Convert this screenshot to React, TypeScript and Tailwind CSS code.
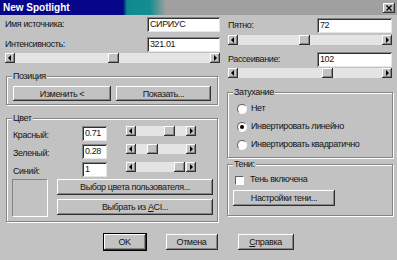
import React from 'react';

const raised =
  'bg-[#c2c2c2] shadow-[inset_-1px_-1px_0_#303030,inset_1px_1px_0_#ffffff,inset_-2px_-2px_0_#858585]';
const sunken =
  'bg-white shadow-[inset_1px_1px_0_#858585,inset_-1px_-1px_0_#e6e6e6,inset_2px_2px_0_#303030]';

function Arrow({ dir }: { dir: 'l' | 'r' }) {
  return (
    <div className={`w-[10px] h-[10px] flex items-center justify-center ${raised}`}>
      <svg width="4" height="6" viewBox="0 0 4 6">
        {dir === 'l' ? <polygon points="3,0 3,6 0,3" fill="#000" /> : <polygon points="1,0 1,6 4,3" fill="#000" />}
      </svg>
    </div>
  );
}

function Slider({ w, pos }: { w: string; pos: number }) {
  return (
    <div className={`flex h-[10px] ${w}`}>
      <Arrow dir="l" />
      <div className="flex-1 bg-[#e4e4e4] flex">
        <div className={`w-[11px] h-[10px] ${raised}`} style={{ marginLeft: pos }} />
      </div>
      <Arrow dir="r" />
    </div>
  );
}

function Input({ value, w }: { value: string; w: string }) {
  return (
    <div className={`${sunken} ${w} h-[15px] pl-[3px] pt-[1px] leading-[13px]`}>{value}</div>
  );
}

function Button({ children, className }: { children: React.ReactNode; className: string }) {
  return (
    <div className={`${raised} ${className} flex items-center justify-center leading-[12px]`}>{children}</div>
  );
}

function Group({ title, className, children }: { title: string; className: string; children: React.ReactNode }) {
  return (
    <div
      className={`border border-[#858585] shadow-[inset_1px_1px_0_#ffffff,1px_1px_0_#ffffff] flex flex-col ${className}`}
    >
      <div className="-mt-[6px] ml-[5px] px-[1px] w-fit bg-[#c2c2c2] leading-[11px]">{title}</div>
      {children}
    </div>
  );
}

function Radio({ checked, label }: { checked?: boolean; label: string }) {
  return (
    <div className="flex items-center h-[14px] gap-[4px]">
      <div className="w-[10px] h-[10px] rounded-full bg-white border border-t-[#606060] border-l-[#606060] border-b-[#ffffff] border-r-[#ffffff] flex items-center justify-center">
        {checked && <div className="w-[4px] h-[4px] rounded-full bg-black" />}
      </div>
      <span>{label}</span>
    </div>
  );
}

function ColorRow({ label, value, pos }: { label: string; value: string; pos: number }) {
  return (
    <div className="flex items-start h-[16px]">
      <div className="w-[75px] pl-[6px] mt-[2px] leading-[14px]">{label}</div>
      <Input value={value} w="w-[25px]" />
      <div className="ml-[19px]">
        <Slider w="w-[70px]" pos={pos} />
      </div>
    </div>
  );
}

export default function App() {
  return (
    <div className="w-[397px] h-[260px] bg-[#c2c2c2] text-[#151515] text-[9px] tracking-[-0.4px] font-['Liberation_Sans',Arial,sans-serif] flex flex-col overflow-hidden">
      <div className="h-[15px] flex items-center justify-between bg-[linear-gradient(to_right,#06068a_0px,#06068a_123px,#0e8a8e_127px,#158d90_150px,#a0a0a0_166px)]">
        <span className="pl-[3px] text-white font-bold text-[10px] tracking-normal">New Spotlight</span>
        <div className={`mr-[2px] mt-[1px] w-[12px] h-[10px] flex items-center justify-center ${raised}`}>
          <svg width="6" height="6" viewBox="0 0 6 6">
            <path d="M0.5 0.5 L5.5 5.5 M5.5 0.5 L0.5 5.5" stroke="#000" strokeWidth="1.4" />
          </svg>
        </div>
      </div>

      <div className="flex">
        {/* left column */}
        <div className="ml-[5px] w-[215px] flex flex-col">
          <div className="mt-[2px] flex items-center justify-between h-[15px]">
            <span>Имя источника:</span>
            <Input value="СИРИУС" w="w-[73px]" />
          </div>
          <div className="mt-[5px] flex items-center justify-between h-[15px]">
            <span>Интенсивность:</span>
            <Input value="321.01" w="w-[73px]" />
          </div>
          <div className="mt-[1px]">
            <Slider w="w-[215px]" pos={93} />
          </div>

          <Group title="Позиция" className="mt-[13px] ml-[1px] w-[212px] h-[29px]">
            <div className="mt-[4px] flex gap-[5px] px-[6px]">
              <Button className="w-[99px] h-[15px]">Изменить &lt;</Button>
              <Button className="w-[96px] h-[15px]">Показать...</Button>
            </div>
          </Group>

          <Group title="Цвет" className="mt-[13px] ml-[1px] w-[212px] h-[104px]">
            <div className="mt-[2px] flex flex-col gap-[2px]">
              <ColorRow label="Красный:" value="0.71" pos={28} />
              <ColorRow label="Зеленый:" value="0.28" pos={11} />
              <ColorRow label="Синий:" value="1" pos={38} />
            </div>
            <div className="mt-[1px] flex">
              <div className="ml-[5px] w-[36px] h-[38px] border border-t-[#858585] border-l-[#858585] border-b-white border-r-white" />
              <div className="ml-[9px] flex flex-col gap-[4px]">
                <Button className="w-[156px] h-[16px]">Выбор цвета пользователя...</Button>
                <Button className="w-[156px] h-[16px]">
                  <span>
                    Выбрать из <u>A</u>CI...
                  </span>
                </Button>
              </div>
            </div>
          </Group>
        </div>

        {/* right column */}
        <div className="ml-[8px] w-[164px] flex flex-col">
          <div className="mt-[3px] flex items-center justify-between h-[15px]">
            <span>Пятно:</span>
            <Input value="72" w="w-[75px]" />
          </div>
          <div className="mt-[2px]">
            <Slider w="w-[164px]" pos={61} />
          </div>
          <div className="mt-[7px] flex items-center justify-between h-[15px]">
            <span>Рассеивание:</span>
            <Input value="102" w="w-[75px]" />
          </div>
          <div className="mt-[1px]">
            <Slider w="w-[164px]" pos={84} />
          </div>

          <Group title="Затухание" className="mt-[14px] -ml-[1px] w-[166px] h-[66px]">
            <div className="mt-[4px] pl-[9px] flex flex-col gap-[4px]">
              <Radio label="Нет" />
              <Radio checked label="Инвертировать линейно" />
              <Radio label="Инвертировать квадратично" />
            </div>
          </Group>

          <Group title="Тени:" className="mt-[6px] -ml-[1px] w-[166px] h-[52px]">
            <div className="mt-[4px] pl-[7px] flex items-center h-[12px] gap-[6px]">
              <div className="w-[9px] h-[9px] bg-white border border-t-[#606060] border-l-[#606060] border-b-white border-r-white" />
              <span>Тень включена</span>
            </div>
            <div className="mt-[4px] pl-[5px]">
              <Button className="w-[102px] h-[16px]">Настройки тени...</Button>
            </div>
          </Group>
        </div>
      </div>

      <div className="mt-[12px] flex justify-center gap-[20px]">
        <Button className="w-[42px] h-[16px] outline outline-1 outline-black">OK</Button>
        <Button className="w-[52px] h-[16px]">Отмена</Button>
        <Button className="w-[56px] h-[16px]">
          <span>
            <u>С</u>правка
          </span>
        </Button>
      </div>
    </div>
  );
}
